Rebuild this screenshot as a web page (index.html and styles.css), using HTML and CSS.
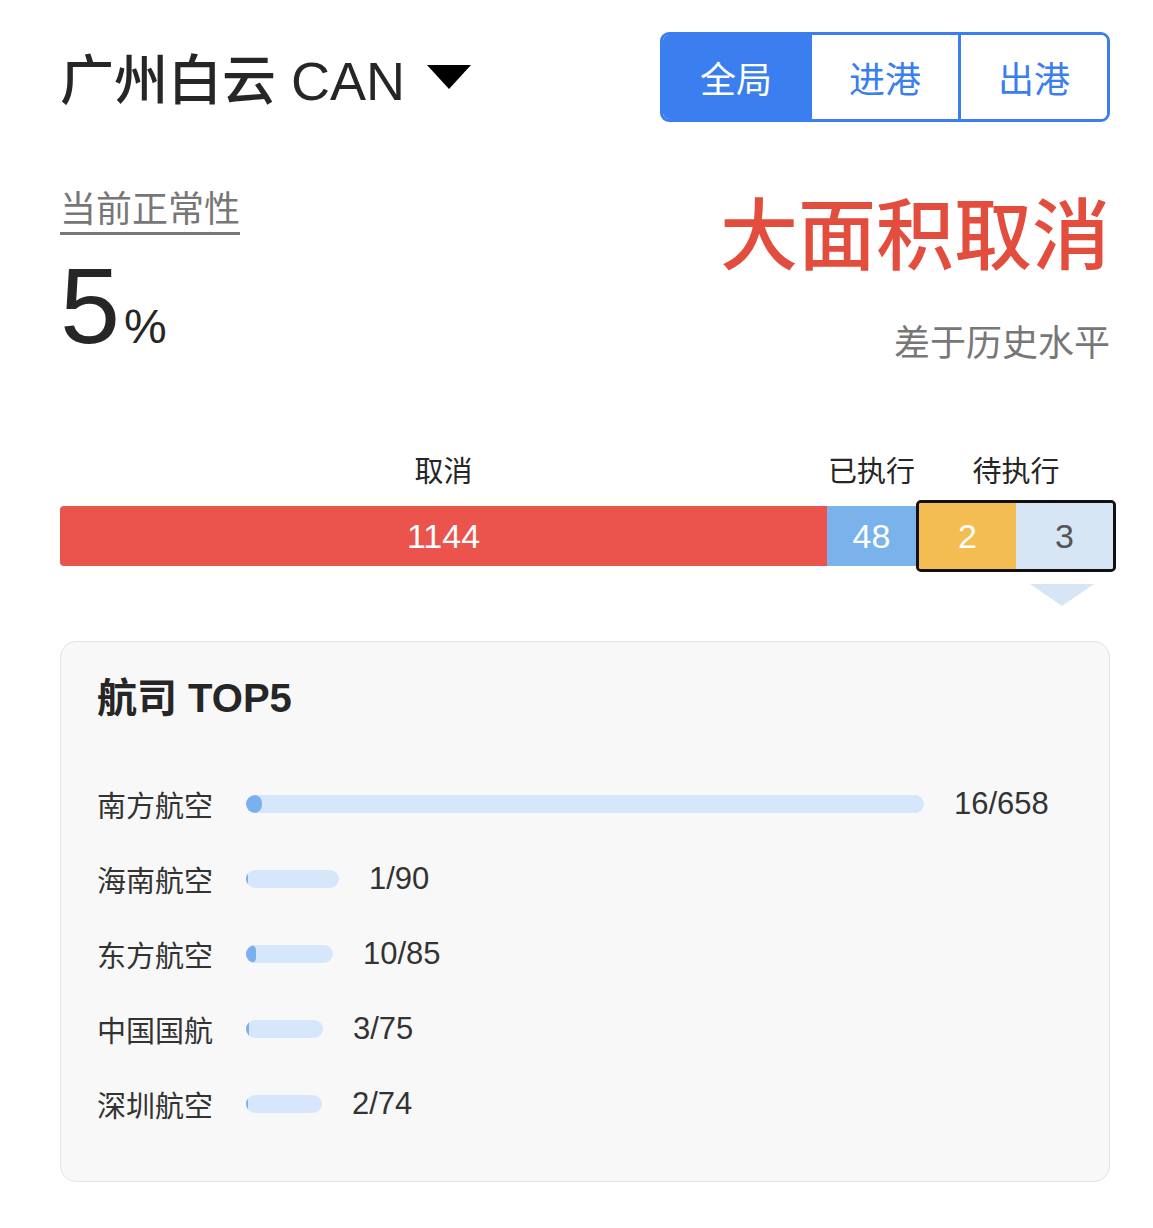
FILE: index.html
```html
<!DOCTYPE html>
<html lang="zh-CN">
<head>
    <meta charset="utf-8" />
    <title>航班正常性</title>
    <link rel="stylesheet" href="styles.css">
</head>
<body>
<div class="header">
    <div class="airport">广州白云 CAN <span class="caret"></span></div>
    <div class="tabs">
        <div class="tab active">全局</div>
        <div class="tab">进港</div>
        <div class="tab">出港</div>
    </div>
</div>

<div class="status">
    <div class="status-left">
        <div class="status-label">当前正常性</div>
        <div class="status-value">5<span class="unit">%</span></div>
    </div>
    <div class="status-right">
        <div class="status-level">大面积取消</div>
        <div class="status-note">差于历史水平</div>
    </div>
</div>

<!-- Flight breakdown: labels and bar share the same columns -->
<div class="breakdown">
    <div class="bar-labels">
        <div>取消</div>
        <div>已执行</div>
        <div>待执行</div>
    </div>
    <div class="bar">
        <div class="seg seg-cancel">1144</div>
        <div class="seg seg-done">48</div>
        <div class="seg-group">
            <div class="seg seg-wait">2</div>
            <div class="seg seg-rest">3</div>
        </div>
    </div>
    <div class="pointer-row"><div class="pointer"></div></div>
</div>

<div class="card">
    <div class="card-title">航司 TOP5</div>
    <div class="rank-list">
        <div class="rank-row">
            <div class="rank-name">南方航空</div>
            <div class="track" style="width: 678px"><div class="fill" style="width: 16px"></div></div>
            <div class="rank-value">16/658</div>
        </div>
        <div class="rank-row">
            <div class="rank-name">海南航空</div>
            <div class="track" style="width: 93px"><div class="fill" style="width: 2px"></div></div>
            <div class="rank-value">1/90</div>
        </div>
        <div class="rank-row">
            <div class="rank-name">东方航空</div>
            <div class="track" style="width: 87px"><div class="fill" style="width: 10px"></div></div>
            <div class="rank-value">10/85</div>
        </div>
        <div class="rank-row">
            <div class="rank-name">中国国航</div>
            <div class="track" style="width: 77px"><div class="fill" style="width: 3px"></div></div>
            <div class="rank-value">3/75</div>
        </div>
        <div class="rank-row">
            <div class="rank-name">深圳航空</div>
            <div class="track" style="width: 76px"><div class="fill" style="width: 2px"></div></div>
            <div class="rank-value">2/74</div>
        </div>
    </div>
</div>
</body>
</html>
```

FILE: styles.css
```css
/* Page: white, content starts 60px from the left */
body {
    margin: 0;
    padding: 32px 43px 40px 60px;
    background-color: #fff;
    color: #262626;
    font-family: "Liberation Sans", "Noto Sans CJK SC", sans-serif;
}
.header {
    display: flex;
    justify-content: space-between;
    align-items: center;
}
.airport {
    display: flex;
    align-items: center;
    font-size: 54px;
    font-weight: 500;
    color: #262626;
    line-height: 1;
    margin-top: 8px;
}
.caret {
    display: inline-block;
    margin-left: 22px;
    width: 0;
    height: 0;
    border-left: 22px solid transparent;
    border-right: 22px solid transparent;
    border-top: 24px solid #000;
    margin-top: -8px;
}
/* Segmented control */
.tabs {
    display: flex;
    height: 90px;
    border: 3px solid #3a7ef0;
    border-radius: 9px;
    overflow: hidden;
    box-sizing: border-box;
}
.tab {
    width: 146px;
    display: flex;
    align-items: center;
    justify-content: center;
    font-size: 36px;
    color: #3a7ef0;
    background-color: #fff;
}
.tab + .tab {
    border-left: 3px solid #3a7ef0;
}
.tab.active {
    background-color: #3a7ef0;
    color: #fff;
}
.status {
    display: flex;
    justify-content: space-between;
    margin-top: 62px;
}
.status-label {
    display: inline-block;
    margin-top: 4px;
    font-size: 36px;
    line-height: 44px;
    color: #777;
    border-bottom: 3px solid #777;
}
.status-value {
    margin-top: 26px;
    font-size: 108px;
    line-height: 90px;
    font-weight: 500;
    color: #262626;
}
.unit {
    font-size: 48px;
    margin-left: 4px;
}
.status-right {
    text-align: right;
}
.status-level {
    font-size: 78px;
    font-weight: 500;
    line-height: 90px;
    color: #e24d3e;
    margin-top: 8px;
}
.status-note {
    margin-top: 40px;
    font-size: 36px;
    line-height: 44px;
    color: #777;
}
/* Breakdown bar */
.breakdown {
    margin-top: 80px;
    width: 1056px;
}
.bar-labels, .bar {
    display: grid;
    grid-template-columns: 767px 89px 200px;
}
.bar-labels div {
    text-align: center;
    font-size: 29px;
    line-height: 40px;
    color: #262626;
}
.bar {
    margin-top: 8px;
    height: 60px;
    align-items: center;
}
.seg {
    height: 60px;
    display: flex;
    align-items: center;
    justify-content: center;
    font-size: 34px;
    color: #fff;
}
.seg-cancel {
    background-color: #ea544d;
    border-radius: 4px 0 0 4px;
}
.seg-done {
    background-color: #7ab3ec;
}
.seg-group {
    display: flex;
    height: 72px;
    box-sizing: border-box;
    border: 3px solid #111;
    border-radius: 5px;
    overflow: hidden;
}
.seg-group .seg {
    flex: 1;
    height: auto;
}
.seg-wait {
    background-color: #f3bd52;
}
.seg-rest {
    background-color: #d6e6f5;
    color: #555;
}
.pointer-row {
    display: flex;
    justify-content: flex-end;
    padding-right: 22px;
    margin-top: 24px;
}
.pointer {
    width: 0;
    height: 0;
    border-left: 32px solid transparent;
    border-right: 32px solid transparent;
    border-top: 22px solid #d6e6f5;
}
/* Airline card */
.card {
    margin-top: 35px;
    padding: 28px 36px 40px;
    background-color: #f8f8f8;
    border: 1px solid #e4e4e4;
    border-radius: 16px;
}
.card-title {
    font-size: 40px;
    font-weight: 700;
    line-height: 56px;
    color: #262626;
}
.rank-list {
    margin-top: 40px;
}
.rank-row {
    display: flex;
    align-items: center;
    height: 75px;
}
.rank-name {
    width: 149px;
    flex-shrink: 0;
    font-size: 29px;
    color: #333;
}
.track {
    height: 18px;
    border-radius: 9px;
    background-color: #d6e7fb;
    overflow: hidden;
}
.fill {
    height: 100%;
    border-radius: 9px;
    background-color: #7ab0ef;
}
.rank-value {
    margin-left: 30px;
    font-size: 31px;
    color: #333;
}
```
